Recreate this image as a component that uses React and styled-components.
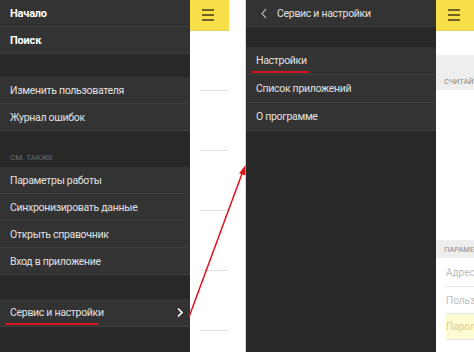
import React from "react";
import styled, { createGlobalStyle } from "styled-components";

const GlobalStyle = createGlobalStyle`
  html, body {
    margin: 0;
    padding: 0;
    background: #ffffff;
  }
  body {
    font-family: Roboto, "Noto Sans", "DejaVu Sans", sans-serif;
  }
`;

const Page = styled.div`
  position: relative;
  display: flex;
  width: 474px;
  height: 352px;
  overflow: hidden;
  background: #ffffff;
`;

const Screen = styled.div`
  display: flex;
  width: ${(p) => p.$w}px;
  height: 100%;
  flex-shrink: 0;
  border-left: ${(p) => (p.$edge ? "1px solid #d6d6d6" : "none")};
`;

const Spacer = styled.div`
  width: ${(p) => p.$w}px;
  flex-shrink: 0;
`;

const Drawer = styled.div`
  display: flex;
  flex-direction: column;
  width: 190px;
  height: 100%;
  flex-shrink: 0;
  background: #282828;
`;

const Row = styled.div`
  display: flex;
  align-items: center;
  justify-content: space-between;
  box-sizing: border-box;
  height: ${(p) => p.$h || 27}px;
  padding: 0 6px 0 10px;
  background: #333333;
  border-bottom: 1px solid #3d3d3d;
  color: ${(p) => (p.$strong ? "#ffffff" : "#e2e2e2")};
  font-size: ${(p) => (p.$strong ? 11 : 10.5)}px;
  font-weight: ${(p) => (p.$strong ? 700 : 400)};
  letter-spacing: ${(p) => (p.$strong ? -0.2 : -0.3)}px;
  white-space: nowrap;
`;

const HeaderRow = styled(Row)`
  justify-content: flex-start;
  gap: 9px;
  padding-left: 14px;
`;

const Gap = styled.div`
  display: flex;
  align-items: flex-end;
  height: ${(p) => p.$h}px;
  flex-shrink: 0;
  padding: 0 10px 5px;
  box-sizing: border-box;
`;

const SectionLabel = styled.span`
  color: #6c6c6c;
  font-size: 8px;
  text-transform: uppercase;
`;

const Content = styled.div`
  display: flex;
  flex-direction: column;
  flex: 1;
  min-width: 0;
  overflow: hidden;
  background: #ffffff;
`;

const TopBar = styled.div`
  display: flex;
  align-items: center;
  height: 31px;
  flex-shrink: 0;
  padding-left: 12px;
  background: #f8df4a;
  border-bottom: 1px solid #e9d35a;
  box-sizing: border-box;
`;

const Burger = styled.div`
  display: flex;
  flex-direction: column;
  gap: 3.5px;
  width: 12px;
  span {
    height: 1.5px;
    background: #6e6222;
  }
`;

const FormLine = styled.div`
  height: 59px;
  flex-shrink: 0;
  margin: 0 1px 0 10px;
  border-bottom: 1px solid #e2e2e2;
`;

const GreyBlock = styled.div`
  display: flex;
  align-items: flex-end;
  height: ${(p) => p.$h}px;
  margin-top: ${(p) => p.$top || 0}px;
  flex-shrink: 0;
  padding: 0 0 ${(p) => p.$pb || 5}px 8px;
  box-sizing: border-box;
  background: #eeeeee;
  color: #8a8a8a;
  font-size: 7.5px;
  white-space: nowrap;
`;

const Field = styled.div`
  display: flex;
  align-items: center;
  height: ${(p) => p.$h}px;
  flex-shrink: 0;
  margin-left: 10px;
  box-sizing: border-box;
  border-bottom: 1px solid #e4e4e4;
  background: ${(p) => (p.$active ? "#fffbd2" : "transparent")};
  color: ${(p) => (p.$active ? "#d9cf8f" : "#bdbdbd")};
  font-size: 10px;
  white-space: nowrap;
`;

const Overlay = styled.svg`
  position: absolute;
  left: 0;
  top: 0;
  pointer-events: none;
`;

const Hamburger = () => (
  <Burger>
    <span />
    <span />
    <span />
  </Burger>
);

const Chevron = ({ left }) => (
  <svg width="8" height="11" viewBox="0 0 8 11">
    <path
      d={left ? "M6 1 L2 5.5 L6 10" : "M2 1.5 L6 5.5 L2 9.5"}
      fill="none"
      stroke={left ? "#cfcfcf" : "#ffffff"}
      strokeWidth={left ? 1.1 : 1.7}
    />
  </svg>
);

const mainItems = ["Изменить пользователя", "Журнал ошибок"];
const extraItems = [
  "Параметры работы",
  "Синхронизировать данные",
  "Открыть справочник",
  "Вход в приложение",
];
const serviceItems = ["Настройки", "Список приложений", "О программе"];

const App = () => {
  return (
    <Page>
      <GlobalStyle />
      <Screen $w={229}>
        <Drawer>
          <Row $strong>Начало</Row>
          <Row $strong>Поиск</Row>
          <Gap $h={23} />
          {mainItems.map((item) => (
            <Row key={item}>{item}</Row>
          ))}
          <Gap $h={36}>
            <SectionLabel>См. также</SectionLabel>
          </Gap>
          {extraItems.map((item) => (
            <Row key={item}>{item}</Row>
          ))}
          <Gap $h={24} />
          <Row $h={28}>
            Сервис и настройки
            <Chevron />
          </Row>
        </Drawer>
        <Content>
          <TopBar>
            <Hamburger />
          </TopBar>
          {[0, 1, 2, 3, 4].map((i) => (
            <FormLine key={i} />
          ))}
        </Content>
      </Screen>
      <Spacer $w={16} />
      <Screen $w={229} $edge>
        <Drawer>
          <HeaderRow>
            <Chevron left />
            Сервис и настройки
          </HeaderRow>
          <Gap $h={20} />
          {serviceItems.map((item) => (
            <Row key={item} $h={28}>
              {item}
            </Row>
          ))}
        </Drawer>
        <Content>
          <TopBar>
            <Hamburger />
          </TopBar>
          <GreyBlock $top={24} $h={35} $pb={4}>
            СЧИТАЙТЕ QR-КОД
          </GreyBlock>
          <GreyBlock $top={150} $h={18} $pb={4}>
            ПАРАМЕТРЫ
          </GreyBlock>
          <Field $h={29}>Адрес сервера</Field>
          <Field $h={27}>Пользователь</Field>
          <Field $h={26} $active>
            Пароль
          </Field>
        </Content>
      </Screen>
      <Overlay width="474" height="352" viewBox="0 0 474 352">
        <line x1="5" y1="324" x2="98" y2="324" stroke="#d9141c" strokeWidth="2" />
        <line x1="252" y1="72" x2="309" y2="72" stroke="#d9141c" strokeWidth="2" />
        <line x1="189" y1="317" x2="243" y2="171" stroke="#e0121c" strokeWidth="1.5" />
        <path d="M245.5 165 L239.2 173.2 L245.3 175.4 Z" fill="#e0121c" />
      </Overlay>
    </Page>
  );
};

export default App;
